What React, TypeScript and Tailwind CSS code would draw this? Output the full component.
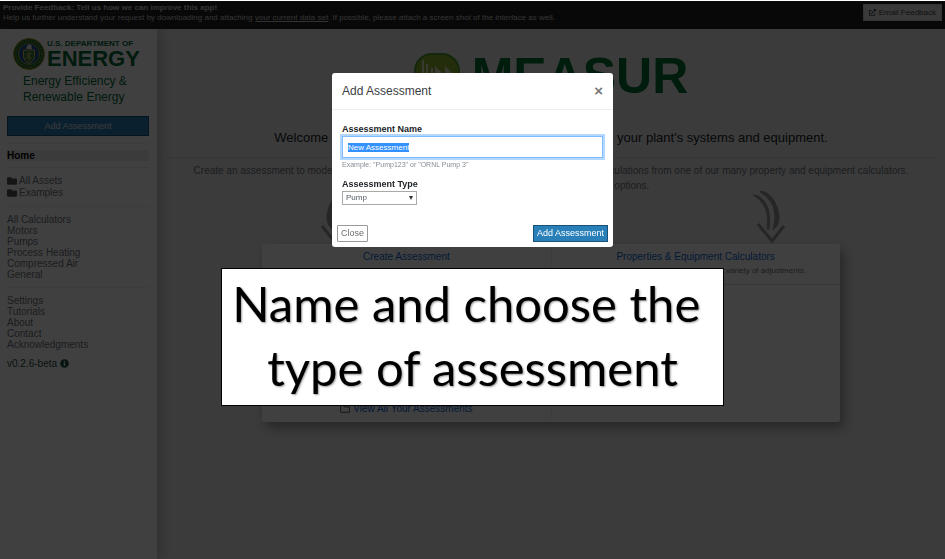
import { useEffect, useRef, type ReactNode } from "react";
import { FaExternalLinkAlt, FaFolder, FaInfoCircle, FaRegFolder } from "react-icons/fa";

const calculators = ["All Calculators", "Motors", "Pumps", "Process Heating", "Compressed Air", "General"];
const pages = ["Settings", "Tutorials", "About", "Contact", "Acknowledgments"];

function DoeSeal() {
  return (
    <svg viewBox="0 0 64 64" className="size-8 shrink-0" aria-hidden="true">
      <circle cx="32" cy="32" r="31" fill="#1b6b35" stroke="#b59a28" strokeWidth="2" />
      <circle cx="32" cy="32" r="26" fill="none" stroke="#a8942e" strokeWidth="3" strokeDasharray="2 3" />
      <circle cx="32" cy="32" r="21" fill="#1c4f94" stroke="#c8ac3c" strokeWidth="1.5" />
      <path d="M27 20c0-5 3-7 6-7 4 0 5 3 4 6l2 3H27z" fill="#e6e6e6" />
      <path d="M21 24h22v12c0 8-6 12-11 15-5-3-11-7-11-15z" fill="#2c7a45" stroke="#d8bd4a" strokeWidth="2" />
      <path d="M25 42l13-13M32 28v18M26 31l12 11" stroke="#d8bd4a" strokeWidth="2" />
    </svg>
  );
}

function MeasurIcon() {
  return (
    <svg viewBox="0 0 46 46" className="size-[46px] shrink-0" aria-hidden="true">
      <rect x="1" y="1" width="44" height="44" rx="17" fill="#8fb42c" stroke="#4f9a34" strokeWidth="2" />
      <path d="M9 35V7M13 35V11M18 35V15" fill="none" stroke="#dfe8c8" strokeWidth="2" />
      <path d="M21 36V13l10 10V13l10 10v13z" fill="#dfe8c8" />
    </svg>
  );
}

function Arrow({ flip = false }: { flip?: boolean }) {
  return (
    <svg
      viewBox="0 0 34 54"
      className={flip ? "h-[54px] w-[34px] -scale-x-100" : "h-[54px] w-[34px]"}
      fill="#989898"
      stroke="#989898"
      aria-hidden="true"
    >
      <path d="M1 5Q9 5 14 14T17 39Q15 40 15 38 17 22 11 14 7 8 1 5z" />
      <path d="M9 1Q20 3 25 17T23 38L21 40Q25 26 21 16 17 7 8 2z" />
      <path d="M6 34l14 17 12-15" fill="none" strokeWidth="3" />
    </svg>
  );
}

function Divider() {
  return <hr className="border-[#eeeeee]" />;
}

function NavList({ items }: { items: string[] }) {
  return (
    <ul className="my-[7px]">
      {items.map((item) => (
        <li key={item}>
          <a href="#" className="block">{item}</a>
        </li>
      ))}
    </ul>
  );
}

function Sidebar() {
  return (
    <aside className="z-10 w-[157px] shrink-0 bg-white pt-[9px] pr-2 pl-[7px] text-[10px] leading-[11px] text-[#6c757d] shadow-[4px_0_12px_rgba(0,0,0,0.2)]">
      <div className="flex items-center gap-[2px] px-[6px] text-[#00683a]">
        <DoeSeal />
        <div className="flex flex-col font-bold">
          <span className="text-[8px] leading-[10px] whitespace-nowrap">U.S. DEPARTMENT OF</span>
          <span className="text-[22px] leading-[20px]">ENERGY</span>
        </div>
      </div>
      <p className="mt-[3px] ml-4 text-[12px] leading-[16px] text-[#00683a]">
        Energy Efficiency &amp;
        <br />
        Renewable Energy
      </p>
      <button type="button" className="mt-[11px] mb-[7px] block h-5 w-full border border-[#1a5276] bg-[#2980b9] text-[9px] text-[#e4e4e4]">
        Add Assessment
      </button>
      <Divider />
      <a href="#" className="my-[6px] block bg-[#e9e9e9] font-bold text-black">Home</a>
      <Divider />
      <ul className="my-[7px] leading-[12px]">
        {["All Assets", "Examples"].map((item) => (
          <li key={item}>
            <a href="#" className="flex items-center gap-[2px]">
              <FaFolder className="text-[#555555]" />
              {item}
            </a>
          </li>
        ))}
      </ul>
      <Divider />
      <NavList items={calculators} />
      <Divider />
      <NavList items={pages} />
      <p className="flex items-center gap-[3px] pt-px text-[#1e5144]">
        v0.2.6-beta <FaInfoCircle className="text-[9px]" />
      </p>
    </aside>
  );
}

function Column({ title, text, children }: { title: string; text: string; children?: ReactNode }) {
  return (
    <section className="flex flex-1 flex-col">
      <header className="border-b border-[#d9d9d9] pt-[5px] pb-[7px] text-center">
        <h2 className="text-[10px] leading-[15px] text-[#0b66d6]">{title}</h2>
        <p className="text-[8px] leading-[13px] text-[#6c757d]">{text}</p>
      </header>
      {children}
    </section>
  );
}

function Dashboard() {
  return (
    <main className="flex-1 bg-[#ebebeb] px-[9px] pt-[22px] text-[#212529]">
      <div className="flex items-center justify-center gap-3">
        <MeasurIcon />
        <h1 className="text-[50px] leading-[50px] font-bold text-[#006f37]">MEASUR</h1>
      </div>
      <p className="mt-[29px] border-b border-[#d4d4d4] pb-3 text-center text-[13px] leading-[15px]">
        Welcome to the most efficient way to manage and optimize your plant's systems and equipment.
      </p>
      <p className="mt-[5px] text-center text-[10px] leading-[15px] text-[#6c757d]">
        Create an assessment to model your system and find opportunities for improvement or run calculations from one of our many property and equipment calculators.
        <br />
        Get started with one of the following options.
      </p>
      <div className="mx-auto -mt-[3px] w-3/4">
        <div className="flex justify-between pr-[54px] pl-[58px]">
          <Arrow flip />
          <Arrow />
        </div>
        <div className="flex h-[178px] rounded-[2px] bg-white shadow-[4px_6px_12px_rgba(0,0,0,0.35)]">
          <Column title="Create Assessment" text="Model and examine data. This will similarly save and open.">
            <a href="#" className="mt-auto mb-[6px] flex items-center justify-center gap-[3px] text-[10px] leading-[15px] text-[#0b66d6]">
              <FaRegFolder className="text-[#555555]" />
              View All Your Assessments
            </a>
          </Column>
          <div className="my-1 w-px bg-[#f0f0f0]" />
          <Column title="Properties & Equipment Calculators" text="Generate detailed properties and test a variety of adjustments." />
        </div>
      </div>
    </main>
  );
}

function AssessmentDialog() {
  const nameRef = useRef<HTMLInputElement>(null);

  useEffect(() => {
    nameRef.current?.focus();
    nameRef.current?.select();
  }, []);

  return (
    <form role="dialog" aria-labelledby="dialog-title" className="w-[281px] rounded-[3px] bg-white text-[#212529]">
      <header className="flex h-[37px] items-center justify-between border-b border-[#eeeeee] px-[10px]">
        <h2 id="dialog-title" className="text-[12px] leading-4 text-[#3c4045]">Add Assessment</h2>
        <button type="button" aria-label="Close dialog" className="text-[15px] leading-4 font-bold text-[#777777]">×</button>
      </header>
      <div className="flex flex-col items-start px-[10px] pt-[13px]">
        <label htmlFor="name" className="text-[9px] leading-[13px] font-bold">Assessment Name</label>
        <input
          id="name"
          ref={nameRef}
          defaultValue="New Assessment"
          className="h-[22px] w-full border border-[#80bdff] px-[5px] text-[8px] ring-2 ring-[#b3d7ff] outline-none selection:bg-[#3390ff] selection:text-white"
        />
        <p className="mt-[2px] text-[7px] leading-[10px] text-[#868e96]">Example: "Pump123" or "ORNL Pump 3"</p>
        <label htmlFor="type" className="mt-2 text-[9px] leading-[12px] font-bold">Assessment Type</label>
        <div className="relative mt-px">
          <select id="type" className="block h-[14px] w-[75px] appearance-none border border-[#a9a9a9] bg-white pl-[3px] text-[8px] text-[#555c63]">
            <option>Pump</option>
          </select>
          <svg viewBox="0 0 4 4" className="pointer-events-none absolute top-[5px] right-1 size-1" aria-hidden="true">
            <path d="M0 0h4L2 4z" fill="#333333" />
          </svg>
        </div>
      </div>
      <footer className="flex justify-between px-[5px] pt-5 pb-[5px] text-[9px] leading-[15px]">
        <button type="button" className="rounded-[1px] border border-[#999999] px-[3px] text-[#6c6c6c]">Close</button>
        <button type="submit" className="border border-[#1a5276] bg-[#2980b9] px-[3px] text-white">Add Assessment</button>
      </footer>
    </form>
  );
}

export default function App() {
  return (
    <div className="flex min-h-screen flex-col bg-white pt-px font-['Liberation_Sans',Arial,sans-serif]">
      <header className="flex h-7 items-start justify-between bg-[#222222] pt-[2px] pr-[3px] pl-[3px] text-[8px] leading-[10px] text-[#cccccc]">
        <div>
          <p className="font-bold">Provide Feedback: Tell us how we can improve this app!</p>
          <p>
            Help us further understand your request by downloading and attaching{" "}
            <a href="#" className="underline">your current data set</a>. If possible, please attach a screen shot of the interface as well.
          </p>
        </div>
        <button type="button" className="mt-px flex h-[17px] items-center gap-[3px] border border-[#cccccc] bg-[#e4e4e4] px-[5px] text-[#444444]">
          <FaExternalLinkAlt className="text-[7px]" />
          Email Feedback
        </button>
      </header>
      <div className="flex flex-1">
        <Sidebar />
        <Dashboard />
      </div>
      <div className="fixed inset-x-0 top-px bottom-0 z-20 flex flex-col items-center bg-black/75 pt-[72px]">
        <AssessmentDialog />
        <p className="mt-[21px] border border-black bg-white px-[10px] pt-[2px] pb-[6px] text-center font-['Lato',sans-serif] text-[49px] leading-[64px] text-black [text-shadow:1px_1px_2px_rgba(0,0,0,0.4)]">
          Name and choose the{"\u00a0"}
          <br />
          type of assessment
        </p>
      </div>
    </div>
  );
}
